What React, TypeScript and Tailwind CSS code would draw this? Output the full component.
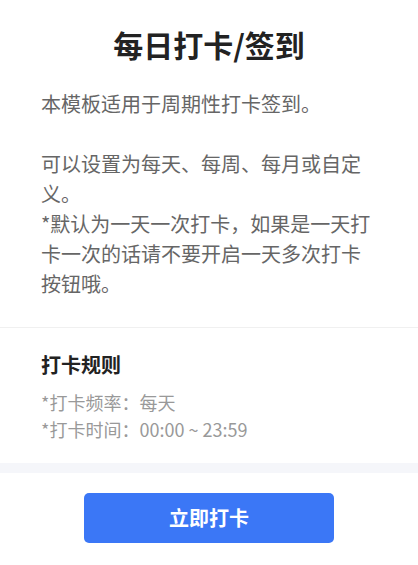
const font = { fontFamily: '"Noto Sans CJK SC", "Noto Sans", sans-serif' };

export default function App() {
  return (
    <div className="w-[418px] min-h-[565px] bg-white" style={font}>
      <section className="border-b border-[#f0f0f0] px-[41px] pt-[23px] pb-[28px]">
        <h1 className="text-center text-[30px] font-bold leading-[42px] text-[#222]">每日打卡/签到</h1>
        <div className="mt-[24px] text-[20px] leading-[30px] text-[#666]">
          <p>本模板适用于周期性打卡签到。</p>
          <p>&nbsp;</p>
          <p>可以设置为每天、每周、每月或自定义。</p>
          <p>*默认为一天一次打卡，如果是一天打卡一次的话请不要开启一天多次打卡按钮哦。</p>
        </div>
      </section>

      <section className="px-[41px] pt-[23px] pb-[20px]">
        <h2 className="text-[20px] font-bold leading-[28px] text-[#222]">打卡规则</h2>
        <div className="mt-[10px] text-[18px] leading-[27px] text-[#999]">
          <p>*打卡频率：每天</p>
          <p>*打卡时间：00:00 ~ 23:59</p>
        </div>
      </section>

      <div className="h-[10px] bg-[#f5f6fa]" />

      <div className="flex justify-center pt-[20px] pb-[21px]">
        <button className="h-[50px] w-[250px] rounded-[5px] bg-[#3b77f6] text-[20px] font-bold text-white">
          立即打卡
        </button>
      </div>
    </div>
  );
}
